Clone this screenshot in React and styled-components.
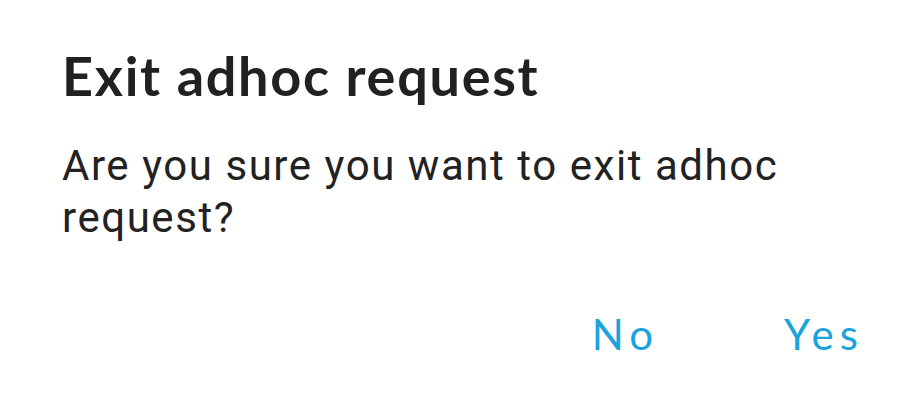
import React from "react";
import styled, { createGlobalStyle } from "styled-components";

const GlobalStyle = createGlobalStyle`
  html, body {
    margin: 0;
    padding: 0;
    background: #ffffff;
  }
`;

const Dialog = ({ title, message, onCancel, onConfirm }) => (
  <Styled.Dialog>
    <Styled.Title>{title}</Styled.Title>
    <Styled.Message>{message}</Styled.Message>
    <Styled.Actions>
      <Styled.ActionButton onClick={onCancel}>No</Styled.ActionButton>
      <Styled.ActionButton onClick={onConfirm}>Yes</Styled.ActionButton>
    </Styled.Actions>
  </Styled.Dialog>
);

const App = () => (
  <>
    <GlobalStyle />
    <Dialog
      title="Exit adhoc request"
      message="Are you sure you want to exit adhoc request?"
    />
  </>
);

const Styled = {
  Dialog: styled.div`
    width: 923px;
    height: 407px;
    box-sizing: border-box;
    padding: 44px 59px 0 62px;
    background: #fff;
    display: flex;
    flex-direction: column;
  `,
  Title: styled.h1`
    margin: 0;
    font-family: Lato, "Open Sans", sans-serif;
    font-weight: 700;
    font-size: 54px;
    line-height: 64px;
    letter-spacing: 1.7px;
    color: #212121;
  `,
  Message: styled.p`
    margin: 32px 0 0 0;
    width: 740px;
    font-family: Roboto, sans-serif;
    font-weight: 400;
    font-size: 42px;
    line-height: 52px;
    letter-spacing: 1.55px;
    color: #222;
  `,
  Actions: styled.div`
    display: flex;
    justify-content: flex-end;
    gap: 125px;
    margin-top: 65px;
  `,
  ActionButton: styled.button`
    border: none;
    background: none;
    padding: 0;
    font-family: Lato, "Open Sans", sans-serif;
    font-weight: 400;
    font-size: 42px;
    line-height: 50px;
    letter-spacing: 6px;
    color: #1aa3dd;
    cursor: pointer;
  `,
};

export default App;
